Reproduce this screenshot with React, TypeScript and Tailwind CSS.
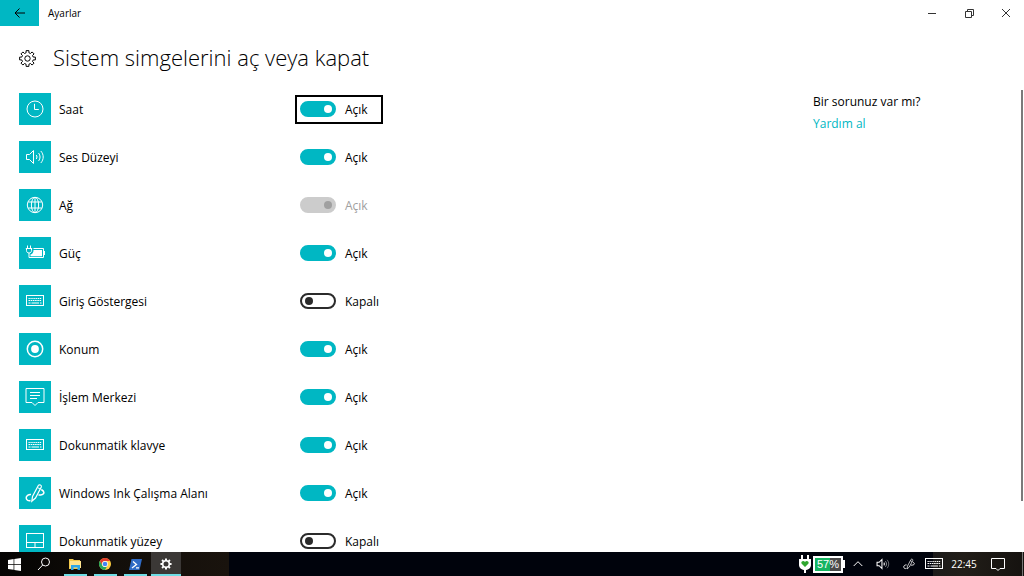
import { useState } from 'react';
import type { ReactNode } from 'react';
import clsx from 'clsx';

interface SystemIcon {
  id: string;
  label: string;
  icon: ReactNode;
  on: boolean;
  disabled?: boolean;
  focused?: boolean;
}

function Svg({ children, className = 'w-5 h-5', box = 20 }: { children: ReactNode; className?: string; box?: number }) {
  return (
    <svg
      className={clsx('shrink-0', className)}
      viewBox={`0 0 ${box} ${box}`}
      fill="none"
      stroke="currentColor"
      strokeWidth="1"
      aria-hidden="true"
    >
      {children}
    </svg>
  );
}

const ClockIcon = () => (
  <Svg>
    <circle cx="10" cy="10" r="8" />
    <path d="M9.5 4.8v5.7h4.3" />
  </Svg>
);

const VolumeIcon = ({ className, dim }: { className?: string; dim?: boolean }) => (
  <Svg className={className}>
    <path d="M1.5 7.5h3l4-4v13l-4-4h-3z" strokeWidth={dim ? 1.5 : 1} />
    <path d="M11.2 8c1 1.2 1 2.8 0 4" strokeWidth={dim ? 1.5 : 1} />
    <path d="M13.5 6c2 2.4 2 5.6 0 8" opacity={dim ? 0.8 : 1} />
    <path d="M15.8 4c3.2 3.6 3.2 8.4 0 12" opacity={dim ? 0.6 : 1} />
  </Svg>
);

const GlobeIcon = () => (
  <Svg>
    <circle cx="10" cy="10" r="7.7" />
    <ellipse cx="10" cy="10" rx="3.6" ry="7.7" />
    <path d="M10 2.3v15.4M3.2 7h13.6M3.2 13h13.6" />
  </Svg>
);

const PowerIcon = () => (
  <Svg>
    <path d="M2.5 2.5v3M5.5 2.5v3M.8 5.5h6.4M1.5 5.500v2c0 1.500 1 2.500 2.500 2.500s2.500-1 2.500-2.500v-2M4 10v4.500h14.500v-9H8.500" />
    <path d="M8.500 7H17v6.200H5.500V11.500c2-.5 3-2 3-4.500z" fill="currentColor" stroke="none" />
    <path d="M19.500 8v4" />
  </Svg>
);

const KeyboardIcon = ({ className }: { className?: string }) => (
  <Svg className={className}>
    <rect x="1.5" y="4.5" width="17" height="10" />
    <path d="M3.5 7.5h13" strokeDasharray="1.3 .6" />
    <path d="M3.5 9.5h13" strokeDasharray="1.6 .6" />
    <path d="M3.5 12h2M6.5 12h7.5M15 12h1.5" />
  </Svg>
);

const LocationIcon = () => (
  <Svg>
    <circle cx="10" cy="10" r="7.7" strokeWidth="1.5" />
    <circle cx="10" cy="10" r="3.9" fill="currentColor" stroke="none" />
  </Svg>
);

const ActionCenterIcon = () => (
  <Svg>
    <path d="M1 1.5h18v14h-6L10 18.5l-3-3H1z" />
    <path d="M5 5.5h10M5 8.5h10M5 11.5h7" />
  </Svg>
);

const InkIcon = ({ className }: { className?: string }) => (
  <Svg className={className}>
    <path d="M6.800 18.300l.7-4.800L13.300 2.500c1-1.500 3.700-.2 3 1.500L10.500 15z" strokeWidth="1.200" />
    <path d="M12.300 4.500l3 1.500" />
    <path d="M6 11.500c-2.500-.3-5 1.200-4.800 3.500.2 2.300 2.300 3 4.300 2.500" strokeWidth="1.500" />
    <path d="M16.300 6.500c4 2.500 3.500 5.500-2.800 5.500" strokeWidth="1.500" />
  </Svg>
);

const TouchpadIcon = () => (
  <Svg>
    <rect x="1.5" y="2.5" width="17" height="14" />
    <path d="M1.5 11.5h17M10 11.5v5" />
  </Svg>
);

// Eight teeth, each one spans 45 degrees: up, across, down, across.
const gearPoints = Array.from({ length: 8 }, (_, i) =>
  [
    [-14, 8.3],
    [-10, 11.3],
    [10, 11.3],
    [14, 8.3],
  ].map(([offset, radius]) => {
    const angle = ((i * 45 + offset) * Math.PI) / 180;
    return `${(12 + radius * Math.sin(angle)).toFixed(2)} ${(12 - radius * Math.cos(angle)).toFixed(2)}`;
  })
).flat();

const gearOutline = `M${gearPoints.join('L')}Z`;

const GearIcon = ({ className }: { className?: string }) => (
  <svg className={className} viewBox="0 0 24 24" fill="none" stroke="currentColor" strokeWidth="1.4" strokeLinejoin="round" aria-hidden="true">
    <path d={gearOutline} />
    <circle cx="12" cy="12" r="3.8" />
  </svg>
);

const SolidGearIcon = ({ className }: { className?: string }) => (
  <svg className={className} viewBox="0 0 24 24" fill="currentColor" fillRule="evenodd" aria-hidden="true">
    <path d={`${gearOutline}M12 7a5 5 0 1 0 0 10a5 5 0 1 0 0-10z`} />
  </svg>
);

const initialIcons: SystemIcon[] = [
  { id: 'clock', label: 'Saat', icon: <ClockIcon />, on: true, focused: true },
  { id: 'volume', label: 'Ses Düzeyi', icon: <VolumeIcon />, on: true },
  { id: 'network', label: 'Ağ', icon: <GlobeIcon />, on: true, disabled: true },
  { id: 'power', label: 'Güç', icon: <PowerIcon />, on: true },
  { id: 'input', label: 'Giriş Göstergesi', icon: <KeyboardIcon />, on: false },
  { id: 'location', label: 'Konum', icon: <LocationIcon />, on: true },
  { id: 'action', label: 'İşlem Merkezi', icon: <ActionCenterIcon />, on: true },
  { id: 'keyboard', label: 'Dokunmatik klavye', icon: <KeyboardIcon />, on: true },
  { id: 'ink', label: 'Windows Ink Çalışma Alanı', icon: <InkIcon />, on: true },
  { id: 'touchpad', label: 'Dokunmatik yüzey', icon: <TouchpadIcon />, on: false },
];

function SettingRow({ item, onToggle }: { item: SystemIcon; onToggle: () => void }) {
  return (
    <li className="flex h-8 shrink-0 items-center">
      <div className="flex w-8 h-8 shrink-0 items-center justify-center bg-[#00b7c3] text-white">{item.icon}</div>
      <span id={`${item.id}-name`} className="w-[244px] shrink-0 pt-0.5 pl-2">
        {item.label}
      </span>
      <label
        className={clsx(
          'flex h-[29px] w-[88px] items-center gap-[9px] border-2 pl-[3px]',
          item.focused ? 'border-black' : 'border-transparent',
          item.disabled && 'text-[#a0a0a0]'
        )}
      >
        <input
          type="checkbox"
          role="switch"
          aria-labelledby={`${item.id}-name`}
          checked={item.on}
          disabled={item.disabled}
          onChange={onToggle}
          className="flex w-9 h-4 shrink-0 appearance-none items-center rounded-full border-2 border-[#2b2b2b] px-[3px] outline-none before:w-2 before:h-2 before:rounded-full before:bg-[#2b2b2b] checked:justify-end checked:border-[#00b7c3] checked:bg-[#00b7c3] checked:px-0.5 checked:before:bg-white disabled:border-[#cccccc] disabled:bg-[#cccccc] disabled:before:bg-[#a0a0a0]"
        />
        <span className="pt-0.5">{item.on ? 'Açık' : 'Kapalı'}</span>
      </label>
    </li>
  );
}

function TitleBar() {
  return (
    <header className="flex h-[26px] shrink-0 items-center">
      <button type="button" aria-label="Geri" className="flex h-full w-[39px] items-center justify-center bg-[#00b7c3]">
        <svg className="w-3 h-3" viewBox="0 0 12 12" fill="none" stroke="black" aria-hidden="true">
          <path d="M1 6h10M5.5 1.5L1 6l4.5 4.5" />
        </svg>
      </button>
      <span className="flex-1 pt-0.5 pl-[9px] text-[10px]">Ayarlar</span>
      <div className="flex h-full text-[#333333]">
        <button type="button" aria-label="Simge durumuna küçült" className="flex w-[37px] items-center justify-center">
          <Svg className="w-2.5 h-2.5" box={10}>
            <path d="M1 5.5h8" />
          </Svg>
        </button>
        <button type="button" aria-label="Önceki boyut" className="flex w-[37px] items-center justify-center">
          <Svg className="w-2.5 h-2.5" box={10}>
            <path d="M1.5 3.5h6v6h-6zM3.5 3V1.5h6v6H8" />
          </Svg>
        </button>
        <button type="button" aria-label="Kapat" className="flex w-[37px] items-center justify-center">
          <Svg className="w-2.5 h-2.5" box={10}>
            <path d="M1 1l8 8M9 1L1 9" />
          </Svg>
        </button>
      </div>
    </header>
  );
}

function TaskButton({ label, children }: { label: string; children: ReactNode }) {
  return (
    <button type="button" aria-label={label} className="flex h-full w-[30px] items-center justify-center">
      <span className="flex h-full w-[23px] items-center justify-center border-b-2 border-[#6fdde5] pt-0.5">{children}</span>
    </button>
  );
}

function Taskbar() {
  return (
    <footer className="flex h-6 shrink-0 bg-[#00030c] text-white">
      <div className="flex w-[229px] bg-linear-to-r from-[#050403] via-[#120e0a] to-[#19130d]">
        <button type="button" aria-label="Başlat" className="flex w-7 items-center justify-center">
          <svg className="w-[13px] h-[13px]" viewBox="0 0 13 13" fill="white" aria-hidden="true">
            <path d="M0 1.9l5.6-.8v5H0zM6.3 1L13 0v6.100H6.300zM0 6.800h5.600v5L0 11.100zM6.300 6.800H13V13l-6.700-1z" />
          </svg>
        </button>
        <button type="button" aria-label="Ara" className="flex w-8 items-center justify-center">
          <Svg className="w-[14px] h-[14px]" box={14}>
            <circle cx="8.5" cy="5" r="4" />
            <path d="M5.7 8L1 13" />
          </Svg>
        </button>
        <TaskButton label="Dosya Gezgini">
          <svg className="w-3 h-3" viewBox="0 0 12 12" aria-hidden="true">
            <path d="M0 1h4l1 1h6v9H0z" fill="#f2c94c" />
            <path d="M1 3h11v7H1z" fill="#ffe48f" />
            <path d="M2 12V7h9v5H8.5V9.5h-4V12z" fill="#2ea7e8" />
          </svg>
        </TaskButton>
        <TaskButton label="Chrome">
          <svg className="w-3 h-3" viewBox="0 0 24 24" aria-hidden="true">
            <circle cx="12" cy="12" r="12" fill="#ffcd40" />
            <path d="M1.6 6A12 12 0 0 1 22.4 6H12a6 6 0 0 0-5.2 9z" fill="#e33b2e" />
            <path d="M1.6 6l5.2 9A6 6 0 0 0 17.2 15L12 24A12 12 0 0 1 1.6 6z" fill="#27a65b" />
            <circle cx="12" cy="12" r="5.8" fill="white" />
            <circle cx="12" cy="12" r="4.6" fill="#4285f4" />
          </svg>
        </TaskButton>
        <TaskButton label="PowerShell">
          <svg className="w-[13px] h-[11px]" viewBox="0 0 13 11" fill="none" aria-hidden="true">
            <path d="M2.5 0H13l-2.5 11H0z" fill="#2f6bc6" />
            <path d="M4 2.500l3.500 3L3 9M7 8.800h3" stroke="white" strokeWidth="1.300" />
          </svg>
        </TaskButton>
        <button
          type="button"
          aria-label="Ayarlar"
          className="ml-px flex h-full w-[30px] items-center justify-center border-b-2 border-[#6fdde5] bg-[#3b3836] pt-0.5"
        >
          <SolidGearIcon className="w-3 h-3" />
        </button>
      </div>

      <div className="flex flex-1 justify-end bg-[linear-gradient(to_left,#15120f,#211d18_60px,#1c1b1a_91px,#00030c_91px)]">
        <div className="flex items-center">
          <svg className="w-3 h-[18px]" viewBox="0 0 12 18" aria-hidden="true">
            <path d="M3 0v4M9 0v4M6 14v4" stroke="white" strokeWidth="2" />
            <path d="M0 4h12v6c0 3-3 5-6 5s-6-2-6-5z" fill="white" />
            <path d="M6 12L2.5 8.5C1.5 6 5 5 6 7c1-2 4.5-1 3.5 1.5z" fill="#2fa62f" />
          </svg>
          <div
            className="ml-0.5 flex h-[17px] w-[30px] items-center justify-center border-2 border-white bg-linear-to-r from-[#16b562] from-57% to-[#4a4a4a] to-57% font-['Liberation_Sans',Arial,sans-serif] text-[11px] leading-none"
          >
            57%
          </div>
          <div className="h-2 w-0.5 bg-white" />
        </div>
        <button type="button" aria-label="Gizli simgeleri göster" className="flex w-[25px] items-center justify-center">
          <Svg className="w-2.5 h-2.5" box={10}>
            <path d="M.7 7L5 2.7 9.3 7" />
          </Svg>
        </button>
        <button type="button" aria-label="Ses" className="flex w-[26px] items-center justify-center">
          <VolumeIcon className="w-3.5 h-3.5" dim />
        </button>
        <button type="button" aria-label="Windows Ink" className="flex w-[26px] items-center justify-center">
          <InkIcon className="w-3 h-3" />
        </button>
        <button type="button" aria-label="Dokunmatik klavye" className="flex w-6 items-center justify-center">
          <KeyboardIcon className="w-5 h-5" />
        </button>
        <span className="flex w-9 items-center justify-center pt-0.5 text-[10px]">22:45</span>
        <button type="button" aria-label="İşlem Merkezi" className="flex w-8 items-center justify-center">
          <Svg className="w-[14px] h-[14px]" box={14}>
            <path d="M.5 1.5h13v10H9L7 13.5l-2-2H.5z" />
          </Svg>
        </button>
        <div className="mr-px ml-2 w-px bg-[#777777]" />
      </div>
    </footer>
  );
}

export default function App() {
  const [icons, setIcons] = useState(initialIcons);

  const toggle = (id: string) => {
    setIcons((prev) => prev.map((item) => (item.id === id ? { ...item, on: !item.on } : item)));
  };

  return (
    <div className="flex h-screen flex-col overflow-hidden bg-white font-['Segoe_UI','Open_Sans','Noto_Sans',sans-serif] text-xs text-black">
      <TitleBar />
      <div className="flex h-16 shrink-0 items-center pl-[19px]">
        <GearIcon className="w-[17px] h-[17px]" />
        <h1 className="pl-[17px] text-[22px] font-light">Sistem simgelerini aç veya kapat</h1>
      </div>
      <main className="flex min-h-0 flex-1">
        <ul className="flex flex-1 flex-col gap-4 overflow-hidden pt-[3px] pl-[19px]">
          {icons.map((item) => (
            <SettingRow key={item.id} item={item} onToggle={() => toggle(item.id)} />
          ))}
        </ul>
        <aside className="flex w-[208px] shrink-0 flex-col items-start gap-1.5 pt-1">
          <p>Bir sorunuz var mı?</p>
          <a href="#yardim" className="text-[#00b7c3]">
            Yardım al
          </a>
        </aside>
        <div className="mr-px h-[89%] w-0.5 bg-[#7a7a7a]" />
      </main>
      <Taskbar />
    </div>
  );
}
